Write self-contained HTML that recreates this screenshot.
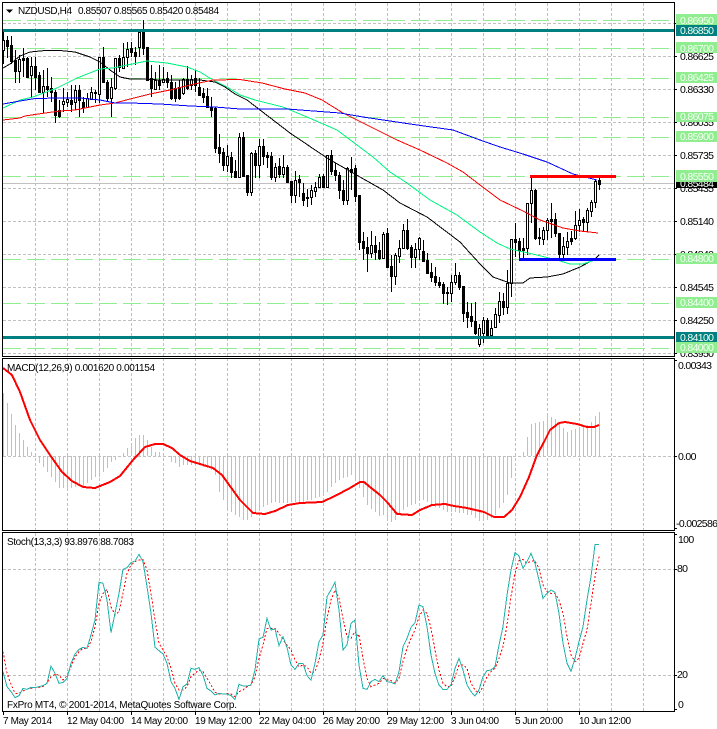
<!DOCTYPE html>
<html>
<head>
<meta charset="utf-8">
<style>
html,body{margin:0;padding:0;background:#fff;width:717px;height:729px;overflow:hidden}
svg{position:absolute;left:0;top:0;display:block}
text{font-family:"Liberation Sans",sans-serif;font-size:10px;fill:#000}
.p{font-size:10.5px;letter-spacing:-.66px}
.w{fill:#f4fff4}
</style>
</head>
<body>
<svg width="717" height="729" viewBox="0 0 717 729" xmlns="http://www.w3.org/2000/svg">
<rect width="717" height="729" fill="#fff"/>

<!-- grid -->
<g stroke="#c0c0c0" stroke-width="1" stroke-dasharray="3 2" fill="none" shape-rendering="crispEdges">
<path d="M35.5 3V711M67.5 3V711M99.5 3V711M131.5 3V711M163.5 3V711M195.5 3V711M227.5 3V711M259.5 3V711M291.5 3V711M323.5 3V711M355.5 3V711M387.5 3V711M419.5 3V711M451.5 3V711M483.5 3V711M515.5 3V711M547.5 3V711M579.5 3V711M611.5 3V711M643.5 3V711"/>
<path d="M3 23.5H674M3 56.5H674M3 89.5H674M3 122.5H674M3 155.5H674M3 188.5H674M3 221.5H674M3 254.5H674M3 287.5H674M3 320.5H674M3 353.5H674"/>
<path d="M3 456.5H674M3 569.5H674M3 675.5H674"/>
</g>

<!-- green level lines -->
<g stroke="#90ee90" stroke-width="1" stroke-dasharray="18 6" fill="none" shape-rendering="crispEdges">
<path d="M3 20.5H674M3 48.5H674M3 78.5H674M3 117.5H674M3 137.5H674M3 176.5H674M3 259.5H674M3 303.5H674M3 348.5H674"/>
</g>
<path d="M3 183.5H674" stroke="#c0c0c0" stroke-width="1" shape-rendering="crispEdges"/>

<!-- candle wicks -->
<path shape-rendering="crispEdges" fill="none" stroke="#000" stroke-width="1" d="M3.5 30V64M7.5 36V58M11.5 36V64M15.5 50V83M19.5 55V83M23.5 48V77M27.5 57V77M31.5 57V97M35.5 57V90M39.5 72V92M43.5 70V113M47.5 68V97M51.5 77V102M55.5 90V123M59.5 100V118M63.5 88V112M67.5 92V107M71.5 85V112M75.5 85V110M79.5 85V117M83.5 97V113M87.5 93V108M91.5 87V100M95.5 90V103M99.5 57V103M103.5 47V83M107.5 80V102M111.5 78V117M115.5 58V90M119.5 55V72M123.5 43V68M127.5 42V67M131.5 42V57M135.5 47V65M139.5 32V57M143.5 20V55M147.5 47V80M151.5 65V97M155.5 72V90M159.5 65V90M163.5 67V83M167.5 72V88M171.5 75V100M175.5 82V102M179.5 80V100M183.5 78V95M187.5 66V90M191.5 75V90M195.5 70V92M199.5 78V95M203.5 88V103M207.5 88V108M211.5 97V117M215.5 107V153M219.5 134V163M223.5 148V171M227.5 145V172M231.5 152V178M235.5 160V178M239.5 133V178M243.5 132V176M247.5 175V196M251.5 152V196M255.5 150V178M259.5 139V178M263.5 139V165M267.5 152V168M271.5 152V180M275.5 163V182M279.5 158V178M283.5 155V178M287.5 165V183M291.5 181V203M295.5 171V203M299.5 175V197M303.5 183V206M307.5 189V207M311.5 185V205M315.5 182V197M319.5 174V188M323.5 174V188M327.5 155V188M331.5 150V175M335.5 163V181M339.5 172V199M343.5 180V205M347.5 167V205M351.5 157V190M355.5 165V202M359.5 195V250M363.5 232V260M367.5 237V272M371.5 231V258M375.5 236V260M379.5 242V260M383.5 232V258M387.5 228V267M391.5 255V292M395.5 253V285M399.5 240V263M403.5 224V248M407.5 219V250M411.5 245V268M415.5 243V268M419.5 237V260M423.5 240V262M427.5 253V274M431.5 263V282M435.5 267V286M439.5 277V288M443.5 282V304M447.5 287V305M451.5 275V302M455.5 263V285M459.5 272V290M463.5 286V322M467.5 302V328M471.5 303V327M475.5 302V335M479.5 324V347M483.5 317V343M487.5 318V336M491.5 320V337M495.5 308V328M499.5 292V323M503.5 293V315M507.5 270V314M511.5 239V297M515.5 223V257M519.5 238V260M523.5 238V260M527.5 203V255M531.5 177V223M535.5 189V240M539.5 228V245M543.5 227V245M547.5 218V240M551.5 203V238M555.5 213V237M559.5 233V258M563.5 237V258M567.5 232V255M571.5 231V245M575.5 211V240M579.5 209V232M583.5 217V232M587.5 208V232M591.5 200V217M595.5 179V208M599.5 175V190"/>
<!-- candle bodies -->
<path shape-rendering="crispEdges" fill="none" stroke="#000" stroke-width="3" d="M3.5 40V51M7.5 40V47M11.5 45V62M15.5 60V72M19.5 59V72M23.5 58V61M27.5 58V78M31.5 66V76M35.5 66V78M39.5 75V93M43.5 86V93M47.5 86V90M51.5 88V93M55.5 92V116M59.5 110V117M63.5 101V105M67.5 99V103M71.5 100V105M75.5 90V103M79.5 90V101M83.5 102V108M87.5 98V108M91.5 92V100M95.5 92V94M99.5 57V95M103.5 57V83M107.5 82V99M111.5 87V99M115.5 58V89M119.5 58V68M123.5 57V69M127.5 49V58M131.5 48V53M135.5 52V57M139.5 32V48M143.5 32V49M147.5 47V81M151.5 78V89M155.5 80V90M159.5 80V86M163.5 79V83M167.5 78V83M171.5 82V99M175.5 88V99M179.5 87V99M183.5 79V94M187.5 79V89M191.5 79V86M195.5 78V86M199.5 87V96M203.5 93V98M207.5 96V108M211.5 107V111M215.5 108V149M219.5 147V154M223.5 152V166M227.5 156V166M231.5 157V173M235.5 171V178M239.5 137V178M243.5 137V177M247.5 175V193M251.5 153V193M255.5 153V166M259.5 146V166M263.5 146V157M267.5 155V158M271.5 156V178M275.5 167V178M279.5 166V175M283.5 167V175M287.5 167V183M291.5 181V196M295.5 180V196M299.5 179V183M303.5 193V201M307.5 197V199M311.5 190V198M315.5 187V192M319.5 177V188M323.5 176V188M327.5 155V188M331.5 155V172M335.5 170V176M339.5 175V191M343.5 190V201M347.5 168V201M351.5 169V173M355.5 168V197M359.5 195V243M363.5 241V249M367.5 247V254M371.5 245V254M375.5 245V253M379.5 250V259M383.5 234V259M387.5 233V268M391.5 266V277M395.5 255V277M399.5 248V257M403.5 230V249M407.5 230V249M411.5 247V258M415.5 249V258M419.5 238V250M423.5 251V262M427.5 260V274M431.5 272V278M435.5 276V283M439.5 282V286M443.5 284V294M447.5 292V294M451.5 282V294M455.5 275V283M459.5 275V288M463.5 286V314M467.5 312V318M471.5 316V322M475.5 321V334M479.5 328V345M483.5 320V334M487.5 320V336M491.5 328V336M495.5 314V328M499.5 301V316M503.5 301V308M507.5 283V308M511.5 239V284M515.5 239V243M519.5 241V251M523.5 248V251M527.5 203V249M531.5 190V204M535.5 190V239M539.5 237V239M543.5 230V240M547.5 220V231M551.5 219V222M555.5 219V234M559.5 233V255M563.5 246V255M567.5 241V248M571.5 238V242M575.5 225V239M579.5 220V226M583.5 219V223M587.5 210V223M591.5 202V212M595.5 181V203M599.5 180V185"/>
<!-- white interiors -->
<path shape-rendering="crispEdges" fill="none" stroke="#fff" stroke-width="1" d="M3.5 41V50M19.5 60V71M31.5 67V75M43.5 87V92M63.5 102V104M67.5 100V102M75.5 91V102M87.5 99V107M91.5 93V99M99.5 58V94M111.5 88V98M115.5 59V88M123.5 58V68M127.5 50V57M139.5 33V47M155.5 81V89M163.5 80V82M183.5 80V93M191.5 80V85M227.5 157V165M239.5 138V177M251.5 154V192M259.5 147V165M275.5 168V177M283.5 168V174M295.5 181V195M311.5 191V197M315.5 188V191M319.5 178V187M327.5 156V187M347.5 169V200M371.5 246V253M383.5 235V258M395.5 256V276M399.5 249V256M403.5 231V248M415.5 250V257M419.5 239V249M451.5 283V293M455.5 276V282M479.5 329V344M483.5 321V333M491.5 329V335M495.5 315V327M499.5 302V315M507.5 284V307M511.5 240V283M527.5 204V248M531.5 191V203M543.5 231V239M547.5 221V230M563.5 247V254M567.5 242V247M575.5 226V238M579.5 221V225M587.5 211V222M591.5 203V211M595.5 182V202"/>

<!-- moving averages -->
<g fill="none" shape-rendering="crispEdges" stroke-width="1">
<polyline stroke="#000" points="3,68 10,64 20,56 30,52 45,50.5 60,50.5 75,52 90,57 100,62 110,70 120,77 130,79 145,79 160,80 185,80 200,80 215,82 225,87 235,94 247,100 290,133 327,158 360,177 383,190 400,203 427,217 460,242 480,264 493,277 510,283 523,283 530,278 547,277 563,274 580,267 595,259 599,255"/>
<polyline stroke="#00f57f" points="3,108 20,100 33,97 57,88 77,78 100,69 113,68 127,65 147,61 167,63 187,67 200,72 213,80 227,87 240,95 255,100 283,107 307,117 337,130 353,142 373,157 390,172 407,183 430,200 457,215 480,232 497,243 510,249 537,255 557,260 570,264 583,264 595,260"/>
<polyline stroke="#f00" points="3,120 20,118 25,116 45,113 60,111 75,110 100,105 115,103 130,99 150,94 170,90 190,85 213,80 240,79.5 262,83 285,89 305,93 322,100 343,113 373,128 397,140 420,150 447,163 463,172 480,185 500,200 523,211 540,220 563,228 580,231 598,233"/>
<polyline stroke="#00f" points="3,104 20,101 35,98.5 60,98 80,98 100,100 115,103 130,103 160,104 190,106 215,107 240,109 287,109 340,113 363,117 390,121 417,125 453,130 480,140 500,147 523,154 547,162 573,174 597,180"/>
</g>

<!-- level lines -->
<g shape-rendering="crispEdges">
<rect x="3" y="29" width="671" height="3" fill="#008080"/>
<rect x="3" y="336" width="671" height="3" fill="#008080"/>
<rect x="530" y="175" width="86" height="3" fill="#f00"/>
<rect x="519" y="258" width="97" height="3" fill="#00f"/>
</g>

<!-- MACD histogram -->
<path shape-rendering="crispEdges" fill="none" stroke="#c0c0c0" stroke-width="1" d="M3.5 456V393M7.5 456V403M11.5 456V414M15.5 456V425M19.5 456V433M23.5 456V440M27.5 456V447M31.5 456V452M39.5 456V463M43.5 456V467M47.5 456V472M51.5 456V477M55.5 456V482M59.5 456V488M63.5 456V488M67.5 456V490M71.5 456V488M75.5 456V487M79.5 456V485M83.5 456V487M87.5 456V483M91.5 456V480M95.5 456V477M99.5 456V477M103.5 456V472M107.5 456V468M111.5 456V462M115.5 456V460M123.5 456V453M127.5 456V448M131.5 456V443M135.5 456V438M139.5 456V435M143.5 456V435M147.5 456V440M151.5 456V447M155.5 456V452M159.5 456V452M171.5 456V462M175.5 456V463M179.5 456V467M183.5 456V465M187.5 456V465M191.5 456V465M195.5 456V465M199.5 456V465M203.5 456V467M207.5 456V467M211.5 456V470M215.5 456V475M219.5 456V492M223.5 456V500M227.5 456V508M231.5 456V512M235.5 456V515M239.5 456V517M243.5 456V520M247.5 456V520M251.5 456V517M255.5 456V512M259.5 456V508M263.5 456V507M267.5 456V505M271.5 456V503M275.5 456V502M279.5 456V503M283.5 456V503M287.5 456V503M291.5 456V502M295.5 456V502M299.5 456V502M303.5 456V502M307.5 456V500M311.5 456V500M315.5 456V498M319.5 456V497M323.5 456V495M327.5 456V492M331.5 456V487M335.5 456V483M339.5 456V480M343.5 456V478M347.5 456V477M351.5 456V475M355.5 456V478M359.5 456V488M363.5 456V497M367.5 456V505M371.5 456V509M375.5 456V512M379.5 456V516M383.5 456V515M387.5 456V520M391.5 456V522M395.5 456V520M399.5 456V515M403.5 456V510M407.5 456V507M411.5 456V505M415.5 456V504M419.5 456V500M423.5 456V500M427.5 456V502M431.5 456V505M435.5 456V507M439.5 456V508M443.5 456V510M447.5 456V512M451.5 456V512M455.5 456V512M459.5 456V513M463.5 456V513M467.5 456V515M471.5 456V515M475.5 456V518M479.5 456V521M483.5 456V521M487.5 456V520M491.5 456V518M495.5 456V515M499.5 456V508M503.5 456V503M507.5 456V495M511.5 456V478M523.5 456V452M527.5 456V437M531.5 456V424M535.5 456V423M539.5 456V422M543.5 456V421M547.5 456V416M551.5 456V417M555.5 456V419M559.5 456V424M563.5 456V428M567.5 456V432M571.5 456V430M575.5 456V429M579.5 456V427M583.5 456V425M587.5 456V425M591.5 456V422M595.5 456V416M599.5 456V412"/>
<polyline fill="none" stroke="#f00" stroke-width="2" shape-rendering="crispEdges" points="3,368 12,375 20,392 30,420 40,440 50,455 62,472 72,481 83,487 95,488 110,482 120,476 133,460 145,447 155,444 163,444 172,448 180,455 190,461 200,464 213,468 222,475 240,500 253,513 265,514 275,511 288,505 300,503 322,502 335,496 350,488 360,482 364,482 370,487 380,495 387,502 397,514 412,515 420,510 432,505 445,504 454,506 467,508 484,512 494,517 504,517 512,510 520,497 529,477 537,455 544,442 550,430 559,423 565,422 577,424 587,427 594,427 599,425"/>

<!-- Stochastic -->
<g fill="none" shape-rendering="crispEdges">
<polyline transform="translate(0 530) scale(.33333)" stroke="#f00" stroke-width="3" stroke-dasharray="6 6" points="9,365 21,430 33,462 45,490 57,490 69,483 81,478 93,475 105,473 117,472 129,470 141,460 153,440 165,433 177,435 189,450 201,437 213,410 225,380 237,365 249,355 261,355 273,335 285,290 297,220 309,190 321,178 333,230 345,255 357,245 369,190 381,130 393,105 405,95 417,90 429,88 441,120 453,190 465,270 477,340 489,360 501,380 513,415 525,460 537,480 549,480 561,470 573,440 585,430 597,420 609,425 621,445 633,465 645,487 657,492 669,492 681,490 693,492 705,500 717,485 729,480 741,470 753,465 765,440 777,385 789,345 801,295 813,295 825,295 837,310 849,330 861,345 873,360 885,390 897,410 909,405 921,410 933,430 945,425 957,390 969,340 981,265 993,210 1005,180 1017,205 1029,265 1041,320 1053,325 1065,305 1077,320"/>
<polyline transform="translate(357 530) scale(.33333)" stroke="#f00" stroke-width="3" stroke-dasharray="6 6" points="6,315 18,385 30,445 42,470 54,465 66,460 78,445 90,450 102,452 114,460 126,445 138,395 150,355 162,325 174,300 186,260 198,240 210,250 222,295 234,360 246,420 258,460 270,470 282,470 294,440 306,405 318,405 330,415 342,460 354,480 366,490 378,470 390,440 402,425 414,415 426,385 438,350 450,285 462,200 474,130 486,92 498,88 510,100 522,93 534,93 546,115 558,165 570,185 582,190 594,190 606,210 618,250 630,320 642,375 654,395 666,385 678,340 690,300 702,220 714,140 726,80"/>
<polyline transform="translate(0 530) scale(.33333)" stroke="#20b2aa" stroke-width="3" points="9,425 21,470 33,485 45,503 57,497 69,475 81,478 93,472 105,473 117,470 129,467 141,460 153,408 165,430 177,460 189,457 201,445 213,400 225,372 237,358 249,352 261,355 273,315 285,270 297,157 309,160 321,210 333,308 345,250 357,190 369,118 381,113 393,98 405,93 417,73 429,95 441,170 453,250 465,352 477,362 489,372 501,400 513,455 525,475 537,508 549,470 561,462 573,415 585,418 597,413 609,435 621,475 633,483 645,495 657,490 669,492 681,492 693,497 705,508 717,463 729,468 741,468 753,465 765,420 777,327 789,322 801,265 813,300 825,297 837,347 849,320 861,352 873,405 885,418 897,400 909,400 921,437 933,450 945,400 957,335 969,315 981,200 993,180 1005,157 1017,240 1029,360 1041,345 1053,280 1065,270 1077,405"/>
<polyline transform="translate(357 530) scale(.33333)" stroke="#20b2aa" stroke-width="3" points="6,405 18,475 30,478 42,455 54,448 66,455 78,437 90,455 102,457 114,462 126,425 138,350 150,325 162,292 174,278 186,225 198,230 210,290 222,375 234,430 246,465 258,478 270,478 282,465 294,415 306,385 318,420 330,465 342,485 354,498 366,480 378,440 390,422 402,420 414,410 426,345 438,290 450,195 462,120 474,68 486,78 498,115 510,95 522,70 534,100 546,150 558,205 570,190 582,180 594,187 606,250 618,340 630,400 642,424 654,385 666,335 678,290 690,210 702,140 714,43 726,43"/>
</g>

<!-- frames -->
<g fill="none" stroke="#000" stroke-width="1" shape-rendering="crispEdges">
<rect x="2.5" y="2.5" width="672" height="354"/>
<rect x="2.5" y="358.5" width="672" height="172"/>
<rect x="2.5" y="532.5" width="672" height="179"/>
<path d="M674 23.5h3M674 56.5h3M674 89.5h3M674 122.5h3M674 155.5h3M674 188.5h3M674 221.5h3M674 254.5h3M674 287.5h3M674 320.5h3M674 353.5h3M674 360.5h3M674 456.5h3M674 528.5h3M674 534.5h3M674 569.5h3M674 675.5h3M674 709.5h3"/>
<path d="M3.5 711v4M67.5 711v4M131.5 711v4M195.5 711v4M259.5 711v4M323.5 711v4M387.5 711v4M451.5 711v4M515.5 711v4M579.5 711v4"/>
</g>

<!-- price scale -->
<text class="p" x="680" y="60">0.86625</text>
<text class="p" x="680" y="93">0.86330</text>
<text class="p" x="680" y="126">0.86035</text>
<text class="p" x="680" y="159">0.85735</text>
<text class="p" x="680" y="192">0.85435</text>
<text class="p" x="680" y="225">0.85140</text>
<text class="p" x="680" y="258">0.84840</text>
<text class="p" x="680" y="291">0.84545</text>
<text class="p" x="680" y="324">0.84250</text>
<text class="p" x="680" y="357">0.83950</text>

<rect x="676" y="178" width="41" height="10" fill="#000" shape-rendering="crispEdges"/>
<text class="p w" x="680" y="187">0.85484</text>

<g shape-rendering="crispEdges">
<rect x="676" y="14" width="41" height="12" fill="#90ee90"/>
<rect x="676" y="25" width="41" height="11" fill="#008080"/>
<rect x="676" y="42" width="41" height="11" fill="#90ee90"/>
<rect x="676" y="72" width="41" height="11" fill="#90ee90"/>
<rect x="676" y="112" width="41" height="10" fill="#90ee90"/>
<rect x="676" y="131" width="41" height="11" fill="#90ee90"/>
<rect x="676" y="170" width="41" height="12" fill="#90ee90"/>
<rect x="676" y="253" width="41" height="11" fill="#90ee90"/>
<rect x="676" y="297" width="41" height="11" fill="#90ee90"/>
<rect x="676" y="332" width="41" height="10" fill="#008080"/>
<rect x="676" y="342" width="41" height="11" fill="#90ee90"/>
</g>
<text class="p w" x="680" y="24">0.86950</text>
<text class="p w" x="680" y="34">0.86850</text>
<text class="p w" x="680" y="52">0.86700</text>
<text class="p w" x="680" y="81">0.86425</text>
<text class="p w" x="680" y="120">0.86075</text>
<text class="p w" x="680" y="140">0.85900</text>
<text class="p w" x="680" y="180">0.85550</text>
<text class="p w" x="680" y="262">0.84800</text>
<text class="p w" x="680" y="306">0.84400</text>
<text class="p w" x="680" y="341">0.84100</text>
<text class="p w" x="680" y="351">0.84000</text>

<text class="p" x="678" y="369">0.00343</text>
<text class="p" x="678" y="460">0.00</text>
<text class="p" x="676" y="527">-0.002586</text>
<text class="p" x="678" y="543">100</text>
<text class="p" x="677" y="572">80</text>
<text class="p" x="677" y="678">20</text>
<text class="p" x="678" y="708">0</text>

<!-- titles -->
<path d="M6 9.5h7l-3.5 3.5z" fill="#000"/>
<text x="18" y="14" textLength="54" lengthAdjust="spacing">NZDUSD,H4</text>
<text x="78" y="14" textLength="141" lengthAdjust="spacing">0.85507 0.85565 0.85420 0.85484</text>
<text x="7" y="371" textLength="148" lengthAdjust="spacing">MACD(12,26,9) 0.001620 0.001154</text>
<text x="7" y="545" textLength="127" lengthAdjust="spacing">Stoch(13,3,3) 93.8976 88.7083</text>
<text x="7" y="708" textLength="230" lengthAdjust="spacing">FxPro MT4, © 2001-2014, MetaQuotes Software Corp.</text>

<!-- time axis -->
<text x="3" y="724" textLength="49" lengthAdjust="spacing">7 May 2014</text>
<text x="67" y="724" textLength="57" lengthAdjust="spacing">12 May 04:00</text>
<text x="131" y="724" textLength="57" lengthAdjust="spacing">14 May 20:00</text>
<text x="195" y="724" textLength="57" lengthAdjust="spacing">19 May 12:00</text>
<text x="259" y="724" textLength="57" lengthAdjust="spacing">22 May 04:00</text>
<text x="323" y="724" textLength="57" lengthAdjust="spacing">26 May 20:00</text>
<text x="387" y="724" textLength="57" lengthAdjust="spacing">29 May 12:00</text>
<text x="451" y="724" textLength="48" lengthAdjust="spacing">3 Jun 04:00</text>
<text x="515" y="724" textLength="48" lengthAdjust="spacing">5 Jun 20:00</text>
<text x="579" y="724" textLength="52" lengthAdjust="spacing">10 Jun 12:00</text>
</svg>
</body>
</html>
